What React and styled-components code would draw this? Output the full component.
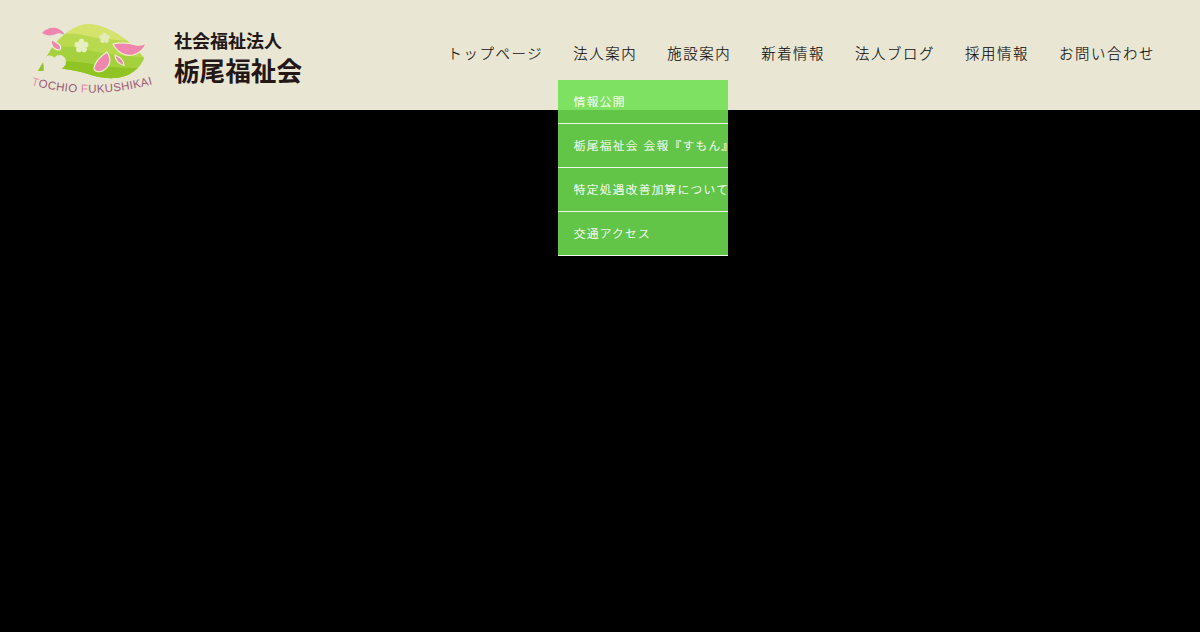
import React from "react";
import styled, { createGlobalStyle } from "styled-components";

const Global = createGlobalStyle`
  html, body { margin: 0; padding: 0; background: #000; }
  body { font-family: "Noto Sans CJK JP", sans-serif; }
  ul { list-style: none; margin: 0; padding: 0; }
  a { text-decoration: none; color: inherit; }
`;

const Page = styled.div`
  width: 1200px;
  height: 632px;
  overflow: hidden;
  background: #000;
`;

const Header = styled.header`
  height: 110px;
  background: #e9e6d4;
  display: flex;
  align-items: center;
  justify-content: space-between;
  padding: 0 30px;
`;

const Brand = styled.a`
  display: flex;
  align-items: center;
  gap: 19px;
  margin-top: 8px;
`;

const Wordmark = styled.div`
  display: flex;
  flex-direction: column;
  color: #231815;
  font-weight: 700;
  margin-top: -2px;
`;

const Corp = styled.span`
  font-size: 18px;
  line-height: 24px;
`;

const Name = styled.span`
  font-size: 25.6px;
  line-height: 36px;
`;

const Nav = styled.ul`
  display: flex;
  height: 104px;
  align-self: flex-start;
`;

const NavItem = styled.li`
  position: relative;
  padding: 0 15px;
  display: flex;
  align-items: center;
  font-size: 14.4px;
  font-weight: 300;
  letter-spacing: 1.6px;
  color: #111;
  -webkit-text-stroke: 0.15px #111;
  white-space: nowrap;
`;

const Dropdown = styled.ul`
  position: absolute;
  top: 80px;
  left: 0;
  width: 170px;
  overflow: hidden;
  background: rgba(111, 224, 82, 0.88);
`;

const DropItem = styled.li`
  height: 44px;
  box-sizing: border-box;
  padding: 0 0 2px 15.5px;
  border-bottom: 1px solid #eef9e9;
  display: flex;
  align-items: center;
  font-size: 11.7px;
  letter-spacing: 1.3px;
  word-spacing: 1px;
  color: #fff;
  -webkit-text-stroke: 0.2px #fff;
  white-space: nowrap;
`;

const Flower = ({ x, y, r, fill }) => (
  <g fill={fill}>
    {[0, 72, 144, 216, 288].map((a) => (
      <circle
        key={a}
        cx={x + r * 0.62 * Math.sin((a * Math.PI) / 180)}
        cy={y - r * 0.62 * Math.cos((a * Math.PI) / 180)}
        r={r * 0.4}
      />
    ))}
    <circle cx={x} cy={y} r={r * 0.4} />
  </g>
);

const pink = "#ee86ae";
const plum = "#9c5a76";
const rim = "#eef0cf";

const Logo = () => (
  <svg width="125" height="76" viewBox="30 21 125 76" aria-label="TOCHIO FUKUSHIKAI">
    <defs>
      <clipPath id="hill">
        <path d="M38 71 C46 58 54 42 64 35 C72 28 80 24 88 24 C102 24 120 34 130 43 C136 48 141 54 144 58 C141 66 134 73 125 76 C112 80 100 78 88 74 C76 70 62 68 52 69 C46 70 42 71 38 71 Z" />
      </clipPath>
    </defs>
    <g clipPath="url(#hill)">
      <rect x="30" y="20" width="125" height="65" fill="#d5e26c" />
      <path d="M30 38 C50 34 70 31 88 36 C102 40 118 40 150 42 V85 H30 Z" fill="#b9d94e" />
      <path d="M30 52 C48 46 68 44 88 50 C104 54 126 56 150 58 V85 H30 Z" fill="#a6d13e" />
      <path d="M30 66 C50 60 72 60 92 64 C110 68 128 68 150 68 V85 H30 Z" fill="#8fc422" />
    </g>
    <g fill="#e9e6d4">
      <circle cx="49.5" cy="62" r="6.5" />
      <circle cx="59.5" cy="61.5" r="6.5" />
      <path d="M43.5 64 L66 64 L56 76 L44 76 Z" />
    </g>
    <Flower x={81.5} y={46} r={7} fill="#e6efc0" />
    <Flower x={104.5} y={38} r={5.5} fill="#e3ebba" />
    <path d="M42 33 C45 29 51 27 56 28 C60 29 63 31 64.5 35 C61 33 58 33 56 34 C52 36 46 36 42 33 Z" fill={pink} />
    <g fill={pink} stroke={rim} strokeWidth="1.2" strokeLinejoin="round">
      <path d="M51.5 39 C50 44 53 50 60 50 C62 46 59 44 57 43 C55 42 53 41 51.5 39 Z" />
      <path d="M113 44 C121 42 130 43 136 45 C140 45.5 143 45 146 43 C145 48 140 53 133 55 C125 57 117 52 113 44 Z" />
      <path d="M107 52 C101 56 95 62 94 68 C94 72 100 73 104 70 C110 66 112 59 107 52 Z" />
      <path d="M115 55 C115 60 119 64 124 65.5 C124 60 120 57 115 55 Z" />
    </g>
    <path id="arc" d="M31 85 Q 92 101 153 84" fill="none" />
    <text fontFamily="Liberation Sans, sans-serif" fontSize="11.5" fill={plum}>
      <textPath href="#arc" textLength="123" lengthAdjust="spacing">
        <tspan fill="#e695b0">T</tspan>OCHIO <tspan fill="#e58aa8">F</tspan>UKUSHIKAI
      </textPath>
    </text>
  </svg>
);

const items = ["トップページ", "法人案内", "施設案内", "新着情報", "法人ブログ", "採用情報", "お問い合わせ"];
const subItems = ["情報公開", "栃尾福祉会 会報『すもん』", "特定処遇改善加算について", "交通アクセス"];

export default function App() {
  return (
    <Page>
      <Global />
      <Header>
        <Brand href="#">
          <Logo />
          <Wordmark>
            <Corp>社会福祉法人</Corp>
            <Name>栃尾福祉会</Name>
          </Wordmark>
        </Brand>
        <Nav>
          {items.map((label) => (
            <NavItem key={label}>
              <a href="#">{label}</a>
              {label === "法人案内" && (
                <Dropdown>
                  {subItems.map((s) => (
                    <DropItem key={s}>{s}</DropItem>
                  ))}
                </Dropdown>
              )}
            </NavItem>
          ))}
        </Nav>
      </Header>
    </Page>
  );
}
